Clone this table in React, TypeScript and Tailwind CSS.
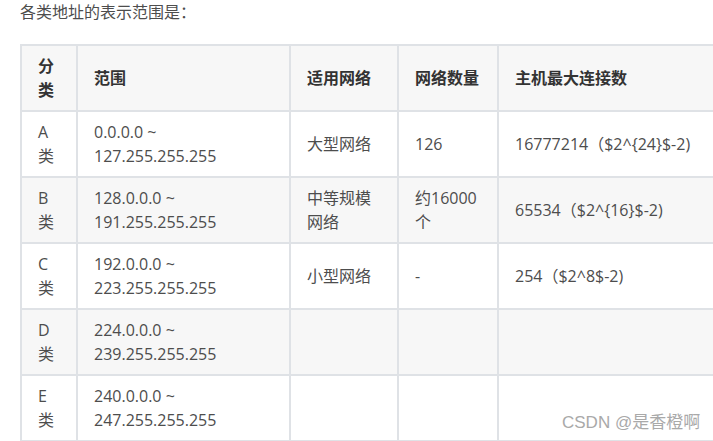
import React from "react";

const rows = [
  { k: "A", r1: "0.0.0.0 ~", r2: "127.255.255.255", net: "大型网络", cnt: "126", host: "16777214（$2^{24}$-2)" },
  { k: "B", r1: "128.0.0.0 ~", r2: "191.255.255.255", net: "中等规模网络", cnt: "约16000个", host: "65534（$2^{16}$-2)" },
  { k: "C", r1: "192.0.0.0 ~", r2: "223.255.255.255", net: "小型网络", cnt: "-", host: "254（$2^8$-2)" },
  { k: "D", r1: "224.0.0.0 ~", r2: "239.255.255.255", net: "", cnt: "", host: "" },
  { k: "E", r1: "240.0.0.0 ~", r2: "247.255.255.255", net: "", cnt: "", host: "" },
];

export default function App() {
  return (
    <div
      className="relative w-[713px] h-[441px] overflow-hidden bg-white text-[#4d4d4d] text-[16px] leading-[24px]"
      style={{ fontFamily: '"Open Sans", "Noto Sans CJK SC", sans-serif' }}
    >
      <p className="pl-[20px] pt-0 text-[#4d4d4d]">各类地址的表示范围是：</p>
      <table className="ml-[20px] mt-[20px] table-fixed border-collapse w-[737px]">
        <colgroup>
          <col className="w-[56px]" />
          <col className="w-[213px]" />
          <col className="w-[108px]" />
          <col className="w-[100px]" />
          <col className="w-[260px]" />
        </colgroup>
        <thead>
          <tr className="bg-[#f7f7f7] h-[66px]">
            <th className="border-2 border-[#dfe2e6] px-[16px] py-[8px] text-left font-bold text-[#333]">分类</th>
            <th className="border-2 border-[#dfe2e6] px-[16px] py-[8px] text-left font-bold text-[#333]">范围</th>
            <th className="border-2 border-[#dfe2e6] px-[16px] py-[8px] text-left font-bold text-[#333]">适用网络</th>
            <th className="border-2 border-[#dfe2e6] px-[16px] py-[8px] text-left font-bold text-[#333]">网络数量</th>
            <th className="border-2 border-[#dfe2e6] px-[16px] py-[8px] text-left font-bold text-[#333]">主机最大连接数</th>
          </tr>
        </thead>
        <tbody>
          {rows.map((r, i) => (
            <tr key={r.k} className={i % 2 === 1 ? "bg-[#f7f7f7] h-[66px]" : "bg-white h-[66px]"}>
              <td className="border-2 border-[#dfe2e6] px-[16px] py-[8px] align-middle">
                {r.k}
                <br />类
              </td>
              <td className="border-2 border-[#dfe2e6] px-[16px] py-[8px] align-middle">
                {r.r1}
                <br />
                {r.r2}
              </td>
              <td className="border-2 border-[#dfe2e6] px-[16px] py-[8px] align-middle">{r.net}</td>
              <td className="border-2 border-[#dfe2e6] px-[16px] py-[8px] align-middle">{r.cnt}</td>
              <td className="border-2 border-[#dfe2e6] px-[16px] py-[8px] align-middle whitespace-nowrap">{r.host}</td>
            </tr>
          ))}
        </tbody>
      </table>
      <div
        className="absolute left-[562px] top-[411px] text-[17px] leading-[24px] text-[#a9a9a9]"
        style={{ fontFamily: '"Liberation Sans", "Noto Sans CJK SC", sans-serif' }}
      >
        CSDN @是香橙啊
      </div>
    </div>
  );
}
